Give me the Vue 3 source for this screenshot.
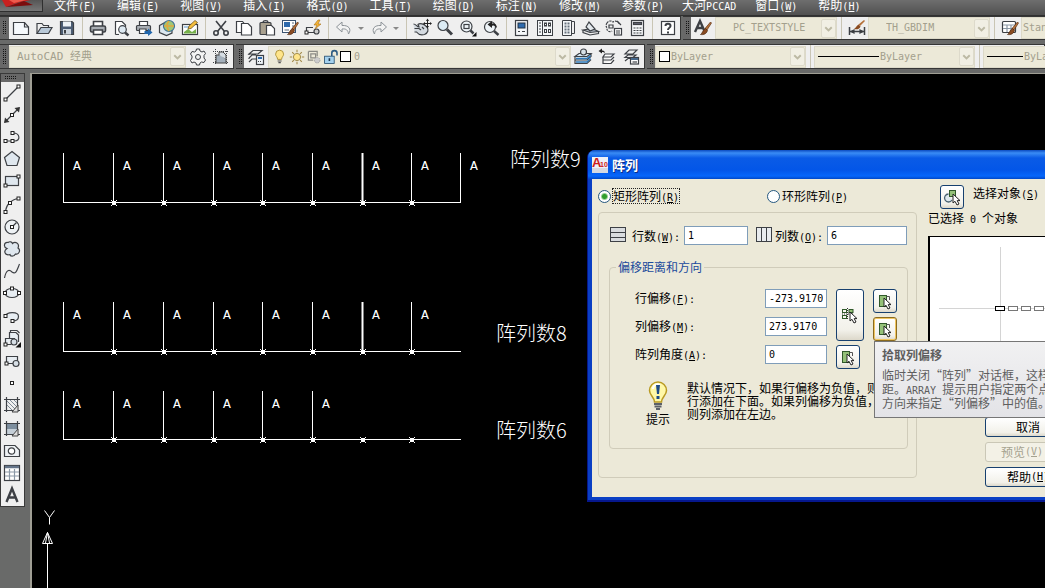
<script setup>
import { h } from 'vue'

// Splits a caption into Latin and Chinese runs and underlines the access key.
const T = (props) =>
  (props.text.match(/[\x20-\x7e]+|[^\x20-\x7e]+/g) || []).map((run) => {
    if (!/^[\x20-\x7e]/.test(run)) return h('span', run)
    const key = run.match(/^(.*\()([A-Z])(\).*)$/)
    return h('span', { class: 'latin' }, key ? [key[1], h('u', key[2]), key[3]] : run)
  })
T.props = ['text']

const menus = ['文件(F)', '编辑(E)', '视图(V)', '插入(I)', '格式(O)', '工具(T)', '绘图(D)', '标注(N)', '修改(M)', '参数(P)', '大河PCCAD', '窗口(W)', '帮助(H)']

const standard = [
  ['new', 'open', 'save'],
  ['print', 'preview', 'publish', 'globe', 'markup'],
  ['cut', 'copy', 'paste', 'match', 'block'],
  ['undo', 'more', 'redo', 'more'],
  ['pan', 'zoom', 'zoomwin', 'zoomprev'],
  ['props', 'center', 'palette', 'sheet', 'markset', 'calc'],
  ['help'],
]

const drawTools = [
  ['line', 'xline', 'pline', 'polygon', 'rect'],
  ['arc', 'circle', 'cloud', 'spline', 'ellipse'],
  ['earc', 'insert', 'make', 'point', 'hatch'],
  ['gradient', 'region', 'table', 'mtext'],
]

const D = '#3d4045'
const node = (x, y) => `<rect x="${x - 1.5}" y="${y - 1.5}" width="3" height="3" fill="#fff" stroke="#222"/>`
const g = (body, extra = '') => `<g fill="none" stroke="${D}" ${extra || 'stroke-width="1.2"'}>${body}</g>`
const cursor = (x, y) => `<path transform="translate(${x} ${y})" d="M0 0V9L2 7.300L4 11L6 10L4.200 6.600H7Z" fill="#fff" stroke="#222" stroke-width="1"/>`
const brush = '<path d="M17.500 4L18.500 5L14 12L12 10.500Z" fill="#b5713a" stroke="#5d3215" stroke-width=".7"/><path d="M12.500 10.500L14.500 12.500C13.500 16 10.500 17 7.500 16.500C9.500 15.500 9.500 12 12.500 10.500Z" fill="#8a4b22" stroke="#4a250e" stroke-width=".7"/>'
const frame = '<path d="M4.500 2V17M15.500 2V17M2 4.500H18M2 15.500H18"/>'

const icons = {
  new: g('<path d="M2.500 4.500H13.500L17.500 9V16.500H2.500Z" fill="#f6f9fc"/><path d="M13.500 4.500V9H17.500"/>'),
  open: g('<path d="M3 15.500V5.500H8L9.500 7.500H14.500V9.500"/><path d="M3 15.500L7 9.500H18L14.500 15.500Z" fill="#b9c9d8"/>'),
  save: g('<path d="M3.500 3.500H15L16.500 5V16.500H3.500Z" fill="#4c5d74"/><rect x="6" y="3.500" width="8" height="5" fill="#eef2f6" stroke="none"/><rect x="6" y="11" width="8" height="5.500" fill="#cdd5de" stroke="none"/><path d="M8 12V15.500" stroke-width="2"/>'),
  print: g('<path d="M5.500 8V3.500H14.500V8" fill="#fff"/><rect x="2.500" y="8" width="15" height="6" rx="1.500" fill="#a8adb3"/><path d="M5.500 12H14.500V16.500H5.500Z" fill="#fff"/>', 'stroke-width="1.6"'),
  preview: g('<path d="M4.500 16.500V3.500H11L14.500 7V9M4.500 16.500H8" fill="#fff"/><circle cx="11.500" cy="11.500" r="3.800" fill="#dde9f2"/><path d="M14 14.500L17.500 17.500" stroke-width="2.500"/>'),
  publish: g('<path d="M5.500 8V3.500H13.500V8" fill="#fff"/><rect x="2.500" y="7.500" width="14" height="5" rx="1" fill="#a8adb3"/><path d="M5.500 11H12V15.500H5.500Z" fill="#fff"/>') + '<path d="M10.500 13H14V10.500L18.500 14.500L14 18V16H10.500Z" fill="#2267ad"/>',
  globe: g('<path d="M2.500 7.500L8 4.500L15 7.500V15L9.500 17.500L2.500 14.500Z" fill="#dce7ef"/>') + '<circle cx="12" cy="8" r="5.500" fill="#9fc779" stroke="#3f7197" stroke-width="1.200"/><path d="M12 3C9 6 10 10 12 13M7 8H17" stroke="#e2a83d" stroke-width="1.600" fill="none"/>',
  markup: g('<rect x="2.500" y="6.500" width="15" height="10" fill="#fff"/>') + '<path d="M4 14L8 11L12 14L16 11V15.500H4Z" fill="#76b04b"/><path d="M4 9H10" stroke="#5b93c7"/><path d="M8 11L9 8L15 2.500L17.500 4.500L11 10.500Z" fill="#f4be3d" stroke="#6f5521" stroke-width=".8"/>',
  cut: g('<path d="M5 3L13.500 13.500M15 3L6.500 13.500"/><circle cx="5" cy="15" r="2.200"/><circle cx="15" cy="15" r="2.200"/>', 'stroke-width="1.6"'),
  copy: g('<path d="M2.500 3.500H8.500L10.500 6V14.500H2.500Z" fill="#fff"/><path d="M7.500 5.500H14L17.500 9V17H7.500Z" fill="#fff"/>'),
  paste: g('<rect x="3" y="4.500" width="11" height="12" rx="1" fill="#a9a18f"/><path d="M6 4.500C6 2 11 2 11 4.500Z" fill="#ddd"/><path d="M9.500 7.500H14.500L17.500 10.500V17H9.500Z" fill="#fff"/>'),
  match: '<rect x="2.500" y="2.500" width="13" height="12" fill="#fff" stroke="#3a5370"/><rect x="4" y="4" width="6" height="5" fill="#2e6aad"/><path d="M12 5H14M12 8H14M4.500 12H9" stroke="#567"/>' + brush,
  block: g('<path d="M3.500 14.500V9.500H10M3.500 14.500H12"/><circle cx="13.500" cy="13.500" r="2.500" fill="#ccc"/>') + node(3.5, 14.5) + '<path d="M15 2L11 7H14L12 11L18 6H15L17 2Z" fill="#f6b436" stroke="#a66e16" stroke-width=".6"/>',
  undo: '<path d="M8 4L2.500 9L8 14V11C12 10.500 14 12 14.500 16C18 11 14.500 7 8 7.500Z" fill="#f3f3f3" stroke="#8c9297"/>',
  redo: '<path d="M12 4L17.500 9L12 14V11C8 10.500 6 12 5.500 16C2 11 5.500 7 12 7.500Z" fill="#f3f3f3" stroke="#8c9297"/>',
  more: '<path d="M7 9H13L10 12Z" fill="#888"/>',
  pan: g('<path d="M1.500 6C4 6 5 9 7 9L6 6.500C8 4.500 12 6 15 9C17 12 16 15 12.500 16.500C9 17.500 6 16 4.500 14H2.500M2.500 10.500H7L9 12M10 9L12 11" fill="#d4dae0"/>') + '<path d="M15.500 2V9M12 5.500H19" stroke="#222"/><path d="M15.500 .5L17 3H14ZM15.500 10.500L17 8H14ZM11 5.500L13 4V7ZM20 5.500L18 4V7Z" fill="#222"/>',
  zoom: g('<circle cx="8" cy="7.500" r="5" fill="#dcecf5"/><path d="M12 11.500L17 16.500" stroke-width="3"/>'),
  zoomwin: g('<circle cx="8.500" cy="8.500" r="5.500" fill="#eef4f8"/><path d="M12.500 12.500L15.500 15.500" stroke-width="2.500"/><rect x="6" y="6.500" width="5" height="4"/>') + '<path d="M18.500 14V18.500H14Z" fill="#111"/>',
  zoomprev: g('<circle cx="9" cy="9" r="5.500" fill="#eef4f8"/><path d="M13 13L17.500 17" stroke-width="2.500"/>') + '<path d="M16 10C16 6 13 5 11 5.500V3L6.500 6.500L11 10V8C13 7 14 8 16 10Z" fill="#222"/>',
  props: g('<rect x="3.500" y="2.500" width="12" height="15" fill="#f5f7f9"/><path d="M6 13.500H8M10 13.500H13"/>') + '<rect x="6" y="5" width="7" height="5" fill="#2e6aad" stroke="#234"/>',
  center: g('<rect x="2.500" y="2.500" width="15" height="15" fill="#f5f7f9"/><path d="M7.500 3V17M4 5H6M4 8H6M4 11H6M4 14H6"/><rect x="9.500" y="5" width="2" height="3"/><rect x="13.500" y="5" width="2" height="3"/><rect x="9.500" y="11.500" width="2" height="3"/><rect x="13.500" y="11.500" width="2" height="3"/>', 'stroke-width="1"'),
  palette: g('<path d="M4.500 2.500H13.500V17.500H4.500Z" fill="#f5f7f9"/><path d="M13.500 3.500H16.500V15.500H13.500"/><path d="M6.500 5.500H12M6.500 8.500H12M6.500 11.500H12M6.500 14.500H12" stroke-width="2" stroke="#66717d" stroke-dasharray="2 1"/>', 'stroke-width="1"'),
  sheet: g('<path d="M2 12L9 14.500L17.500 13.500L11 10.500Z" fill="#b7bec6"/><path d="M5 9L8 4L14 11L9 13Z" fill="#e4e9ed"/><path d="M2 12V14.500L9 17L17.500 15.500V13.500"/>'),
  markset: g('<path d="M3 5C5 2 8 3 9 4C12 2 15 4 15 6M3 5C1 8 3 9 3 11C3 14 7 14 8 13" stroke-dasharray="2 1"/><path d="M5 7H9V10H5ZM13 3L17 7"/><rect x="10.500" y="10.500" width="7" height="6.500" fill="#fff"/><path d="M12 13H16M12 15H16"/>'),
  calc: g('<rect x="4.500" y="2.500" width="12" height="15" fill="#f5f7f9"/><rect x="6.500" y="4.500" width="8" height="2" fill="#667"/><path d="M6.500 10H15M6.500 12.500H15M6.500 15H15" stroke-dasharray="2 1"/>'),
  help: g('<rect x="3.500" y="3.500" width="13" height="13" fill="#fff"/><path d="M7.500 8C7.500 5 12.500 5 12.500 8C12.500 10 10 9.500 10 12" stroke-width="2"/><path d="M10 13.500V15.500" stroke-width="2"/>'),
  textstyle: g('<path d="M2 14L7 3L11 12M4 10H10" stroke-width="2.400"/>') + brush,
  dimstyle: g('<path d="M2.500 9V17M17.500 9V17M3 13.500H17" stroke-width="1.500"/><path d="M4 13.500L7 12V15ZM16 13.500L13 12V15Z" fill="#333"/>') + '<path d="M17 2L18 3L13 8L11.500 6.500Z" fill="#b5713a"/><path d="M11.500 6.500L13.500 8.500C12 12 9 11.500 7 11C9 10 9 8 11.500 6.500Z" fill="#8a4b22"/>',
  tablestyle: g('<rect x="2.500" y="3.500" width="13" height="11" rx="1" fill="#fff"/><path d="M3 7H15M3 10.500H15M7 7V14M11 7V14" stroke="#8a97a5"/>') + brush,
  gear: g('<path d="M8.500 2H11.500L12 4L14 5L16 4L17.500 6.500L16 8.500V11L17.500 13L16 15.500L13.500 15L12 16L11.500 18H8.500L8 16L6 15L4 16L2.500 13.500L4 11V9L2.500 7L4 4.500L6.500 5L8 4Z" fill="#f4f4f4"/><circle cx="10" cy="10" r="2.500"/>', 'stroke-width="1"'),
  myspace: g(frame, 'stroke-dasharray="1 1"') + '<path d="M5 16V8H10L15 12V16Z" fill="#a4b0bc" stroke="#444"/><path d="M8 8V5H12L15 8V12" fill="#d6dde3" stroke="#444"/>',
  layers: g('<path d="M3 7L7 3.500H16L12 7ZM3 11L6 8H10M3 15L6 12H10M3 7V8M3 11V12"/><rect x="10.500" y="8.500" width="7" height="9" fill="#eef3f8"/><rect x="12" y="10" width="4" height="2" fill="#2e6aad" stroke="none"/><path d="M12 14.500H16" stroke-dasharray="1 1"/>'),
  layercur: g('<path d="M2 9.500L6 6.500H18L14 9.500ZM2 13H14L18 9.500V6.500M2 16.500H14L18 12.500M2 9.500V17" fill="#d7e8f6"/><path d="M3 11.500H14L17.500 8.500M3 15H14L17.500 11.500" stroke="#2f79b9" stroke-width="1.600"/><circle cx="10.500" cy="5" r="3" fill="#d7e1e8"/>'),
  layerprev: g('<path d="M8 7H17L14 10H6ZM6 13H14L17 10M6 16.500H14L17 13M6 10V17" fill="#fff"/>') + '<path d="M8 6C8 4 6 3.500 5 3.500V1.500L1.500 4L5 6.500V5C6 5 7 5 8 6Z" fill="#222"/>',
  layerstate: g('<path d="M4 7L8 3H16L12 7ZM4 10.500L7 8H15L12 10.500ZM4 14L7 11.500H10"/><rect x="9.500" y="10.500" width="8" height="6.500" fill="#fff"/><path d="M10 12H17" stroke-width="2" stroke="#47688b"/><path d="M11.500 15H16"/>'),
  bulb: '<path d="M7 13C7 10 4.500 9 4.500 6.500A5 5 0 0 1 14.500 6.500C14.500 9 12 10 12 13Z" fill="#ffe58a" stroke="#a18426"/><path d="M7 15H12M8 17H11" stroke="#555" stroke-width="1.500"/>',
  sun: '<path d="M10 1V4M10 16V19M1 10H4M16 10H19M4 4L6 6M14 14L16 16M16 4L14 6M4 16L6 14" stroke="#a08746" stroke-width="1.300"/><circle cx="10" cy="10" r="4.500" fill="#ffe58a" stroke="#8e7634"/>',
  vpfreeze: '<path d="M3 3H14V9M3 3V14H9M6 6H12V11H6Z" fill="none" stroke="#8b8b85" stroke-width="1.500"/><circle cx="14" cy="14" r="3.500" fill="#ccc" stroke="#999" stroke-dasharray="2 1"/>',
  unlock: '<path d="M11 9V5C11 1 17.500 1 17.500 5V8" fill="none" stroke="#2d5c83" stroke-width="2"/><rect x="2" y="9" width="12" height="9" fill="#a4d1ee" stroke="#204a6b"/><path d="M8 11.500V15" stroke="#1d3850" stroke-width="2"/>',
  line: g('<path d="M3.500 16.500L16.500 3.500"/>') + node(3.5, 16.5) + node(16.5, 3.5),
  xline: g('<path d="M3 17L17 3"/>') + '<path d="M2 18L3 12.500L7.500 17ZM18 2L17 7.500L12.500 3Z" fill="#333"/>' + node(10, 10),
  pline: g('<path d="M3.500 14H13C18.500 14 18.500 6 11 6"/>') + node(3.5, 14) + node(10.5, 14) + node(10.5, 6),
  polygon: g('<path d="M10 2.500L17.500 8.500L15 16.500H5L2.500 8.500Z" fill="#dfe7ee"/>'),
  rect: g('<rect x="3.500" y="5.500" width="13" height="9" fill="#dfe7ee"/>') + node(3.5, 14.5) + node(16.5, 5.5),
  arc: g('<path d="M3.500 17C4 10 9 4.500 16.500 3.500"/>') + node(3.5, 17) + node(8, 8) + node(16.5, 3.5),
  circle: g('<circle cx="10" cy="10" r="7" fill="#edf1f4"/><path d="M10 10L14.500 5.500"/>') + node(10, 10),
  cloud: g('<path d="M5 9.500C1 8 2 3 6 3.500C8 2 10 3 10.500 4.500C13 2 18 4 16 9C19 11 17 16 13.500 15C12 18 8 17.500 8 15.500C3 17 1 12 5 9.500Z" fill="#dfe7ee"/>'),
  spline: g('<path d="M2.500 17C4 9 7 8 10 11C14 14 15 9 17.500 3"/>'),
  ellipse: g('<ellipse cx="10" cy="10" rx="7" ry="4.500" fill="#e7edf2"/>') + node(3, 10) + node(17, 10) + node(10, 5.5),
  earc: g('<path d="M3.500 9C5 4.500 16.500 4.500 16.500 9.500C16.500 13 13 14 10.500 14" fill="#e7edf2"/>') + node(3.5, 9) + node(10.5, 14),
  insert: g('<path d="M7.500 9V3.500H14L16.500 6V13M3.500 15.500V9.500H13" fill="#e7edf2"/><path d="M3.500 15.500H9M8.500 3V1.500H15L17.500 4"/><circle cx="12" cy="13" r="3" fill="#d7dfe6"/>') + node(3.5, 15.5) + '<path d="M19 13V18.500H13.500Z" fill="#111"/>',
  make: g('<path d="M4.500 12.500V5.500H15.500V10M4.500 12.500H11" fill="#e7edf2"/><circle cx="14" cy="12.500" r="3" fill="#d7dfe6"/>') + node(4.5, 12.5),
  point: node(10, 10),
  hatch: g(frame + '<path d="M5 6L14 15M5 10L10 15M8 5L15 12M12 5L15 8" stroke="#7f8b97" stroke-width="1"/>') + '<path d="M16 10V17H10Z" fill="#ddd" stroke="#444"/>',
  gradient: '<rect x="5" y="5" width="10" height="10" fill="#7d8e9e"/><rect x="5" y="10" width="10" height="5" fill="#c4ced7"/>' + g(frame) + '<path d="M16 10V17H10Z" fill="#ddd" stroke="#444"/>',
  region: g('<path d="M2.500 4.500H13L17.500 9V15.500H2.500Z" fill="#eef1f4"/><circle cx="9.500" cy="10" r="3.200" fill="#fff"/>'),
  table: g('<rect x="2.500" y="2.500" width="15" height="15" fill="#fff"/><path d="M3 4H17" stroke-width="2.500" stroke="#65758a"/><path d="M3 9H17M3 13H17M7.500 6V17M12.500 6V17" stroke="#8b98a6"/>'),
  mtext: g('<path d="M4.500 17L10 3.500L15.500 17M6.500 12.500H13.500" stroke-width="2.400"/>'),
  rows: g('<rect x="2.500" y="2.500" width="15" height="14" fill="#d9dcdf"/><path d="M3 7.500H17M3 12.500H17"/>', 'stroke-width="1"'),
  cols: g('<rect x="2.500" y="2.500" width="15" height="14" fill="#e8ebee"/><path d="M7.500 3V16M12.500 3V16"/>', 'stroke-width="1"'),
  pick: '<rect x="4.500" y="4.500" width="7" height="11" fill="#94c178" stroke="#30592a"/><path d="M11.500 5.500H14.500V9" fill="none" stroke="#555"/>' + cursor(9, 7),
  pickboth: '<rect x="2.500" y="4.500" width="4" height="3" fill="none" stroke="#30592a"/><rect x="9" y="4.500" width="4" height="3" fill="#94c178" stroke="#30592a"/><rect x="2.500" y="10.500" width="4" height="3" fill="none" stroke="#30592a"/><path d="M7.500 3V15M2 9H13" stroke="#333" stroke-dasharray="1 1"/>' + cursor(10, 7),
  select: '<path d="M6.500 7A4 4 0 1 0 10 13" fill="#dfe9ee" stroke="#4a6272" stroke-width="1.300"/><rect x="7.500" y="3.500" width="6" height="6" fill="#94c178" stroke="#30592a"/>' + cursor(11, 7),
  chev: '<path d="M5 8L10 13L15 8" fill="none" stroke="#bcb9a4" stroke-width="3"/>',
}

// Drawing area, in canvas coordinates.
const xs = [31, 81, 131, 181, 230, 280, 330, 379, 428]
const arrays = [
  { top: 79, base: 128, bars: 9, letters: 9, label: '阵列数', count: '9', lx: 478, ly: 93 },
  { top: 228, base: 277, bars: 8, letters: 8, label: '阵列数', count: '8', lx: 464, ly: 267 },
  { top: 317, base: 365, bars: 6, letters: 6, label: '阵列数', count: '6', lx: 464, ly: 364 },
]
const marks = xs.slice(1, 8)
</script>

<template>
  <div class="app" lang="zh-CN">
    <nav class="menubar">
      <button class="logo" aria-label="AutoCAD">
        <svg viewBox="0 0 42 12" width="42" height="12">
          <path d="M2 0L6 7L20 2L31 0Z" fill="#c8201f" />
          <path d="M6 7L24 1L33 5L20 6Z" fill="#7c0c0d" />
          <path d="M9 0L14 3L26 0Z" fill="#ee5a4c" />
        </svg>
      </button>
      <button v-for="m in menus" :key="m" class="menu" :class="{ plugin: m.includes('PCCAD') }"><T :text="m" /></button>
    </nav>

    <div class="bars">
      <div class="bar">
        <div class="toolbar">
          <i class="grip"></i>
          <template v-for="(group, gi) in standard" :key="gi">
            <i v-if="gi" class="sep"></i>
            <button v-for="(n, i) in group" :key="i" class="tool" :class="{ slim: n === 'more' }" :aria-label="n">
              <svg viewBox="0 0 20 20" v-html="icons[n]"></svg>
            </button>
          </template>
        </div>
        <div class="toolbar grow">
          <i class="grip"></i>
          <button class="tool wide" aria-label="textstyle"><svg viewBox="0 0 20 20" v-html="icons.textstyle"></svg></button>
          <div class="combo w-style indent">
            <select aria-label="textstyle"><option>PC_TEXTSTYLE</option></select>
            <svg class="chev" viewBox="0 0 20 20" v-html="icons.chev"></svg>
          </div>
          <i class="sep"></i>
          <button class="tool" aria-label="dimstyle"><svg viewBox="0 0 20 20" v-html="icons.dimstyle"></svg></button>
          <div class="combo w-style indent">
            <select aria-label="dimstyle"><option>TH_GBDIM</option></select>
            <svg class="chev" viewBox="0 0 20 20" v-html="icons.chev"></svg>
          </div>
          <i class="sep"></i>
          <button class="tool" aria-label="tablestyle"><svg viewBox="0 0 20 20" v-html="icons.tablestyle"></svg></button>
          <div class="combo w-style near">
            <select aria-label="tablestyle"><option>Standard</option></select>
            <svg class="chev" viewBox="0 0 20 20" v-html="icons.chev"></svg>
          </div>
        </div>
      </div>

      <div class="bar">
        <div class="toolbar">
          <i class="grip"></i>
          <div class="combo w-space">
            <select aria-label="workspace"><option>AutoCAD 经典</option></select>
            <svg class="chev" viewBox="0 0 20 20" v-html="icons.chev"></svg>
          </div>
          <button class="tool" aria-label="gear"><svg viewBox="0 0 20 20" v-html="icons.gear"></svg></button>
          <button class="tool" aria-label="myspace"><svg viewBox="0 0 20 20" v-html="icons.myspace"></svg></button>
        </div>
        <div class="toolbar">
          <i class="grip"></i>
          <button class="tool wide" aria-label="layers"><svg viewBox="0 0 20 20" v-html="icons.layers"></svg></button>
          <div class="combo w-layer">
            <svg v-for="n in ['bulb', 'sun', 'vpfreeze', 'unlock']" :key="n" class="state" viewBox="0 0 20 20" v-html="icons[n]"></svg>
            <i class="swatch"></i>
            <select aria-label="layer"><option>0</option></select>
            <svg class="chev" viewBox="0 0 20 20" v-html="icons.chev"></svg>
          </div>
          <button v-for="n in ['layercur', 'layerprev', 'layerstate']" :key="n" class="tool wide" :aria-label="n">
            <svg viewBox="0 0 20 20" v-html="icons[n]"></svg>
          </button>
        </div>
        <div class="toolbar grow">
          <i class="grip"></i>
          <div class="combo w-color">
            <i class="swatch"></i>
            <select aria-label="color"><option>ByLayer</option></select>
            <svg class="chev" viewBox="0 0 20 20" v-html="icons.chev"></svg>
          </div>
          <i class="sep"></i>
          <div class="combo w-type">
            <i class="rule"></i>
            <select aria-label="linetype"><option>ByLayer</option></select>
            <svg class="chev" viewBox="0 0 20 20" v-html="icons.chev"></svg>
          </div>
          <i class="sep"></i>
          <div class="combo w-type">
            <i class="rule short"></i>
            <select aria-label="lineweight"><option>ByLayer</option></select>
            <svg class="chev" viewBox="0 0 20 20" v-html="icons.chev"></svg>
          </div>
        </div>
      </div>
    </div>

    <main class="work">
      <aside class="draw">
        <i class="grip flat"></i>
        <div v-for="(group, gi) in drawTools" :key="gi" class="drawgroup">
          <button v-for="n in group" :key="n" class="tool" :aria-label="n"><svg viewBox="0 0 20 20" v-html="icons[n]"></svg></button>
        </div>
      </aside>

      <section class="canvas">
        <svg class="drawing" width="100%" height="100%">
          <g v-for="a in arrays" :key="a.count">
            <path :d="`M31 ${a.base + 0.5}H429`" stroke="#fff" />
            <path v-for="(x, i) in xs.slice(0, a.bars)" :key="x" :d="`M${x + 0.5} ${a.top}V${a.base}`" stroke="#fff" :stroke-width="i === 6 ? 2 : 1" />
            <text v-for="x in xs.slice(0, a.letters)" :key="'t' + x" class="mark" :x="x + 10" :y="a.top + 17">A</text>
            <g v-for="x in marks" :key="'m' + x">
              <path :d="`M${x - 2} ${a.base - 2}l6 6m0 -6l-6 6`" stroke="#fff" />
              <rect :x="x - 1" :y="a.base - 1" width="4" height="4" fill="#fff" />
            </g>
            <text class="caption" :x="a.lx" :y="a.ly">{{ a.label }}<tspan class="count">{{ a.count }}</tspan></text>
          </g>
          <g fill="none" stroke="#fff">
            <path d="M12.500 436.500L17.500 443.500L22.500 436.500M17.500 443.500V450.500" />
            <path d="M15.500 458.500L10.500 469.500H20.500ZM15.500 458.500L13.500 469M15.500 458.500L17.500 469" />
            <path d="M15.500 470V600" />
          </g>
        </svg>
      </section>
    </main>

    <div class="dialog" role="dialog">
      <header class="titlebar">
        <svg viewBox="0 0 16 16" width="16" height="16">
          <rect width="16" height="16" fill="#eef1f7" />
          <rect y="11" width="16" height="5" fill="#d5d9e2" />
          <text x="0" y="10" font-family="Liberation Sans, sans-serif" font-weight="bold" font-size="13" fill="#cc1b1b">A</text>
          <text x="8" y="10" font-family="Liberation Sans, sans-serif" font-weight="bold" font-size="7" fill="#cc1b1b">10</text>
        </svg>
        <h1>阵列</h1>
      </header>
      <div class="body">
        <div class="left">
          <div class="kinds">
            <label class="radio"><input type="radio" name="kind" checked /><span class="focus"><T text="矩形阵列(R)" /></span></label>
            <label class="radio"><input type="radio" name="kind" /><span><T text="环形阵列(P)" /></span></label>
          </div>
          <div class="panel">
            <div class="counts">
              <svg viewBox="0 0 20 20" v-html="icons.rows"></svg>
              <label for="rows"><T text="行数(W):" /></label>
              <input id="rows" class="field" value="1" />
              <svg viewBox="0 0 20 20" v-html="icons.cols"></svg>
              <label for="cols"><T text="列数(O):" /></label>
              <input id="cols" class="field last" value="6" />
            </div>
            <fieldset>
              <legend>偏移距离和方向</legend>
              <div class="offsets">
                <label for="ro"><T text="行偏移(F):" /></label>
                <input id="ro" class="field" value="-273.9170" />
                <button class="xp tall" aria-label="pickboth"><svg viewBox="0 0 20 20" v-html="icons.pickboth"></svg></button>
                <button class="xp" aria-label="pick row"><svg viewBox="0 0 20 20" v-html="icons.pick"></svg></button>
                <label for="co"><T text="列偏移(M):" /></label>
                <input id="co" class="field" value="273.9170" />
                <button class="xp hot" aria-label="拾取列偏移"><svg viewBox="0 0 20 20" v-html="icons.pick"></svg></button>
                <label for="an"><T text="阵列角度(A):" /></label>
                <input id="an" class="field" value="0" />
                <button class="xp small" aria-label="pick angle"><svg viewBox="0 0 20 20" v-html="icons.pick"></svg></button>
              </div>
              <div class="hint">
                <div class="tip">
                  <svg viewBox="0 0 20 30" width="20" height="30">
                    <path d="M6.500 21C6.500 16 1.500 14.500 1.500 9.500A8.500 8.500 0 0 1 18.500 9.500C18.500 14.500 13.500 16 13.500 21Z" fill="#fff8a8" stroke="#b99a22" stroke-width="1.500" />
                    <path d="M5 8C5 4 9 2 12 4" stroke="#fff" stroke-width="2" fill="none" />
                    <path d="M8 4H12L11 13H9Z" fill="#1d4a87" />
                    <rect x="8.500" y="15" width="3" height="3" fill="#1d4a87" />
                    <path d="M6 23H14M6.500 25.500H13.500M8 28H12" stroke="#5b6068" stroke-width="1.800" />
                  </svg>
                  <span>提示</span>
                </div>
                <p>默认情况下，如果行偏移为负值，则<br />行添加在下面。如果列偏移为负值，<br />则列添加在左边。</p>
              </div>
            </fieldset>
          </div>
        </div>
        <div class="right">
          <div class="picker">
            <button id="sel" class="xp" aria-label="选择对象"><svg viewBox="0 0 20 20" v-html="icons.select"></svg></button>
            <label for="sel"><T text="选择对象(S)" /></label>
          </div>
          <div class="selected"><T text="已选择 0 个对象" /></div>
          <div class="preview">
            <svg width="100%" height="144">
              <path d="M70.500 10V138M9 71.500H134" stroke="#d4d4d4" />
              <rect v-for="i in 6" :key="i" :x="52.500 + i * 13" y="69.500" width="9" height="4" fill="#fff" :stroke="i === 1 ? '#000' : '#777'" />
            </svg>
          </div>
          <div class="actions">
            <button class="xp text">取消</button>
            <button class="xp text" disabled><T text="预览(V) <" /></button>
            <button class="xp text"><T text="帮助(H)" /></button>
          </div>
        </div>
      </div>
      <div class="tooltip" role="tooltip">
        <strong>拾取列偏移</strong>
        <p><T text="临时关闭“阵列”对话框，这样" /><br /><T text="距。ARRAY 提示用户指定两个点" /><br /><T text="方向来指定“列偏移”中的值。" /></p>
      </div>
    </div>
  </div>
</template>

<style>
body {
  overflow: hidden;
  background: #666;
}
.latin {
  font: 10px "DejaVu Sans Mono", monospace;
  line-height: 1;
  white-space: pre;
}
.latin u {
  text-underline-offset: 1px;
}
</style>

<style scoped>
* {
  box-sizing: border-box;
}
.app {
  display: flex;
  flex-direction: column;
  position: relative;
  height: 100vh;
  overflow: hidden;
  background: #696a69;
  font: 12px "Noto Sans CJK SC", sans-serif;
  color: #000;
}
button {
  padding: 0;
  border: 0;
  background: none;
  color: inherit;
  font: inherit;
}
svg {
  display: block;
}
.menubar {
  display: flex;
  flex: none;
  height: 16px;
  background: linear-gradient(#6e6e6e, #505050);
  border-bottom: 1px solid #303030;
  color: #fff;
}
.logo {
  width: 43px;
  height: 12px;
  background: linear-gradient(#555, #777);
  border: solid #2f2f2f;
  border-width: 0 1px 1px 0;
  overflow: hidden;
}
.menu {
  height: 10px;
  padding: 0 10px 0 11px;
  line-height: 10px;
  white-space: nowrap;
}
.plugin {
  padding: 0 8px;
}
.bars {
  flex: none;
  display: flex;
  flex-direction: column;
  gap: 4px;
  padding-bottom: 4px;
}
.bar {
  display: flex;
  gap: 2px;
  height: 24px;
}
.bar:last-child {
  height: 25px;
}
.toolbar {
  display: flex;
  flex: none;
  align-items: center;
  padding-right: 1px;
  background: #efefef;
  border: solid #353535;
  border-width: 1px 1px 1px 0;
}
.grow {
  flex: 1 0 0;
  min-width: 0;
}
.grip {
  flex: none;
  align-self: stretch;
  width: 8px;
  padding: 4px 2px;
  background: conic-gradient(#151515 25%, transparent 0) 0 0 / 2px 2px content-box content-box, #686868;
}
.toolbar:first-child .grip {
  width: 9px;
}
.flat {
  width: auto;
  height: 8px;
  margin-bottom: -2px;
  padding: 2px 7px 2px 3px;
}
.sep {
  flex: none;
  width: 8px;
  align-self: stretch;
  background: linear-gradient(#c9c5b4, #c9c5b4) center / 1px 100% no-repeat;
}
.tool {
  display: flex;
  flex: none;
  align-items: center;
  justify-content: center;
  width: 23px;
  height: 22px;
}
.tool svg {
  flex: none;
  width: 20px;
  height: 20px;
}
.slim {
  width: 12px;
}
.wide {
  width: 24px;
}
.combo {
  display: flex;
  flex: none;
  align-items: center;
  height: 22px;
  padding-left: 3px;
  background: #ece9d8;
  border: 1px solid #dcd9c8;
}
.combo select {
  flex: 1;
  min-width: 0;
  height: 20px;
  padding: 0 0 0 1px;
  appearance: none;
  background: none;
  border: 0;
  color: #a3a08d;
  font: 10px "DejaVu Sans Mono", "Noto Sans CJK SC", monospace;
  line-height: 18px;
}
.combo.indent select {
  padding-left: 14px;
}
.combo.near {
  padding-left: 0;
}
.chev {
  flex: none;
  width: 15px;
  height: 19px;
  background: #f1efe4;
  border: 1px solid #dddacb;
  border-radius: 2px;
}
.w-style {
  width: 122px;
}
.w-space {
  width: 177px;
}
.combo.w-space select {
  padding-left: 4px;
  font-size: 11px;
}
.w-layer {
  width: 303px;
}
.combo.w-layer select {
  padding-left: 3px;
}
.w-color {
  width: 151px;
}
.w-type {
  width: 161px;
}
.state {
  flex: none;
  width: 16px;
  height: 16px;
  margin-right: 1px;
}
.swatch {
  flex: none;
  width: 11px;
  height: 11px;
  background: #fff;
  border: 1px solid #000;
}
.rule {
  flex: none;
  width: 61px;
  height: 1px;
  background: #000;
}
.short {
  width: 36px;
}
.work {
  display: flex;
  flex: 1;
  align-items: flex-start;
  min-height: 0;
}
.draw {
  display: flex;
  flex: none;
  flex-direction: column;
  gap: 2px;
  width: 25px;
  margin-right: 5px;
  background: #efefef;
  border: 1px solid #3a3a3a;
}
.drawgroup {
  display: flex;
  flex-direction: column;
}
.draw .tool {
  width: 22px;
}
.canvas {
  flex: 1;
  align-self: stretch;
  min-width: 0;
  background: #000;
  border: solid #a09f95;
  border-width: 1px 0 0 2px;
}
.mark {
  fill: #fff;
  font: 13px "Liberation Mono", monospace;
}
.caption {
  fill: #fff;
  font: 300 20px "Noto Sans CJK SC", sans-serif;
}
.count {
  font: 300 20px "Noto Sans CJK SC", sans-serif;
}
.dialog {
  position: absolute;
  left: 587px;
  top: 150px;
  width: 500px;
  padding: 0 4px 3px;
  background: #0a3fc4;
  border: solid #06178c;
  border-width: 0 1px 2px;
  border-radius: 8px 8px 0 0;
}
.titlebar {
  display: flex;
  align-items: center;
  gap: 4px;
  height: 29px;
  margin: 0 -4px;
  padding: 0 4px;
  background: linear-gradient(#0a49c0, #3a8cf5 3px, #0a5be6 8px, #0356e8 20px, #0667fb 26px, #0148c8);
  border-radius: 7px 7px 0 0;
}
.titlebar h1 {
  margin: 0;
  color: #fff;
  font: bold 13px "Noto Sans CJK SC", sans-serif;
  text-shadow: 1px 1px #0c2f86;
}
.body {
  display: flex;
  gap: 11px;
  padding: 6px 6px 10px;
  background: #ece9d8;
}
.left {
  width: 319px;
  flex: none;
}
.kinds {
  display: grid;
  grid-template-columns: 169px 1fr;
  height: 22px;
  align-items: center;
}
.radio {
  display: flex;
  align-items: center;
  gap: 2px;
  line-height: 14px;
  white-space: nowrap;
}
.radio input {
  appearance: none;
  width: 13px;
  height: 13px;
  margin: 0;
  background: #fff;
  border: 1px solid #24577f;
  border-radius: 50%;
}
.radio input:checked {
  background: radial-gradient(#2f9e2c 2px, #fff 4px);
}
.focus {
  outline: 1px dotted #222;
}
.panel {
  margin-top: 5px;
  padding: 12px 8px 28px 9px;
  border: 1px solid #d0ccba;
  border-radius: 4px;
}
.counts {
  display: flex;
  align-items: center;
  white-space: nowrap;
}
.counts svg {
  width: 20px;
  height: 20px;
  margin-right: 4px;
}
.counts label {
  width: 52px;
}
.counts label + .field {
  width: 64px;
  margin-right: 6px;
}
.counts svg:nth-of-type(2) {
  margin-right: 1px;
}
.counts label + .last {
  flex: 1;
  min-width: 0;
  margin-right: 1px;
}
.field {
  height: 19px;
  padding: 0 3px;
  background: #fff;
  border: 1px solid #7f9db9;
  border-radius: 0;
  color: #000;
  font: 10px "DejaVu Sans Mono", monospace;
}
fieldset {
  min-width: 0;
  margin: 14px 0 0 1px;
  padding: 14px 8px 22px 25px;
  border: 1px solid #d0ccba;
  border-radius: 4px;
}
legend {
  margin-left: -19px;
  padding: 0 2px;
  color: #1b4a9c;
  line-height: 16px;
}
.offsets {
  display: grid;
  grid-template-columns: 121px 62px 28px 24px;
  grid-auto-rows: 24px;
  gap: 4px 9px;
}
.offsets label {
  line-height: 18px;
}
.xp {
  display: flex;
  align-items: center;
  justify-content: center;
  width: 24px;
  height: 24px;
  background: linear-gradient(#fff, #f2f1ea 80%, #dcd8ca);
  border: 1px solid #17406f;
  border-radius: 3px;
}
.xp svg {
  flex: none;
  width: 20px;
  height: 20px;
}
.tall {
  grid-row: 1 / 3;
  grid-column: 3;
  width: 28px;
  height: auto;
}
.hot {
  grid-column: 4;
  border-color: #8b6b1e;
  box-shadow: inset 0 0 0 1px #f0c560;
}
.small {
  grid-column: 3;
}
.hint {
  display: flex;
  gap: 17px;
  margin-top: 12px;
  padding-left: 11px;
  white-space: nowrap;
}
.tip {
  display: flex;
  flex-direction: column;
  align-items: center;
  gap: 1px;
  line-height: 14px;
}
.hint p {
  margin: 0;
  line-height: 13px;
}
.right {
  flex: 1;
}
.picker {
  display: flex;
  gap: 9px;
  padding-left: 12px;
  line-height: 16px;
}
.selected {
  line-height: 17px;
}
.preview {
  margin-top: 10px;
  height: 144px;
  background: #fff;
  border: solid #000;
  border-width: 1px 0 0 2px;
}
.actions {
  display: flex;
  flex-direction: column;
  gap: 5px;
  padding: 37px 0 0 57px;
}
.text {
  width: 86px;
  height: 20px;
  line-height: 16px;
}
.text:disabled {
  background: #f3f1e6;
  border-color: #cac7b6;
  color: #a5a28f;
}
.tooltip {
  position: absolute;
  left: 286px;
  top: 191px;
  width: 240px;
  padding: 5px 7px 7px;
  background: linear-gradient(#f1f1f2, #e3e3e7);
  border: 1px solid #767676;
  color: #5e5e5e;
  white-space: nowrap;
}
.tooltip strong {
  display: block;
  line-height: 16px;
}
.tooltip p {
  margin: 5px 0 0;
  line-height: 14px;
}
</style>
